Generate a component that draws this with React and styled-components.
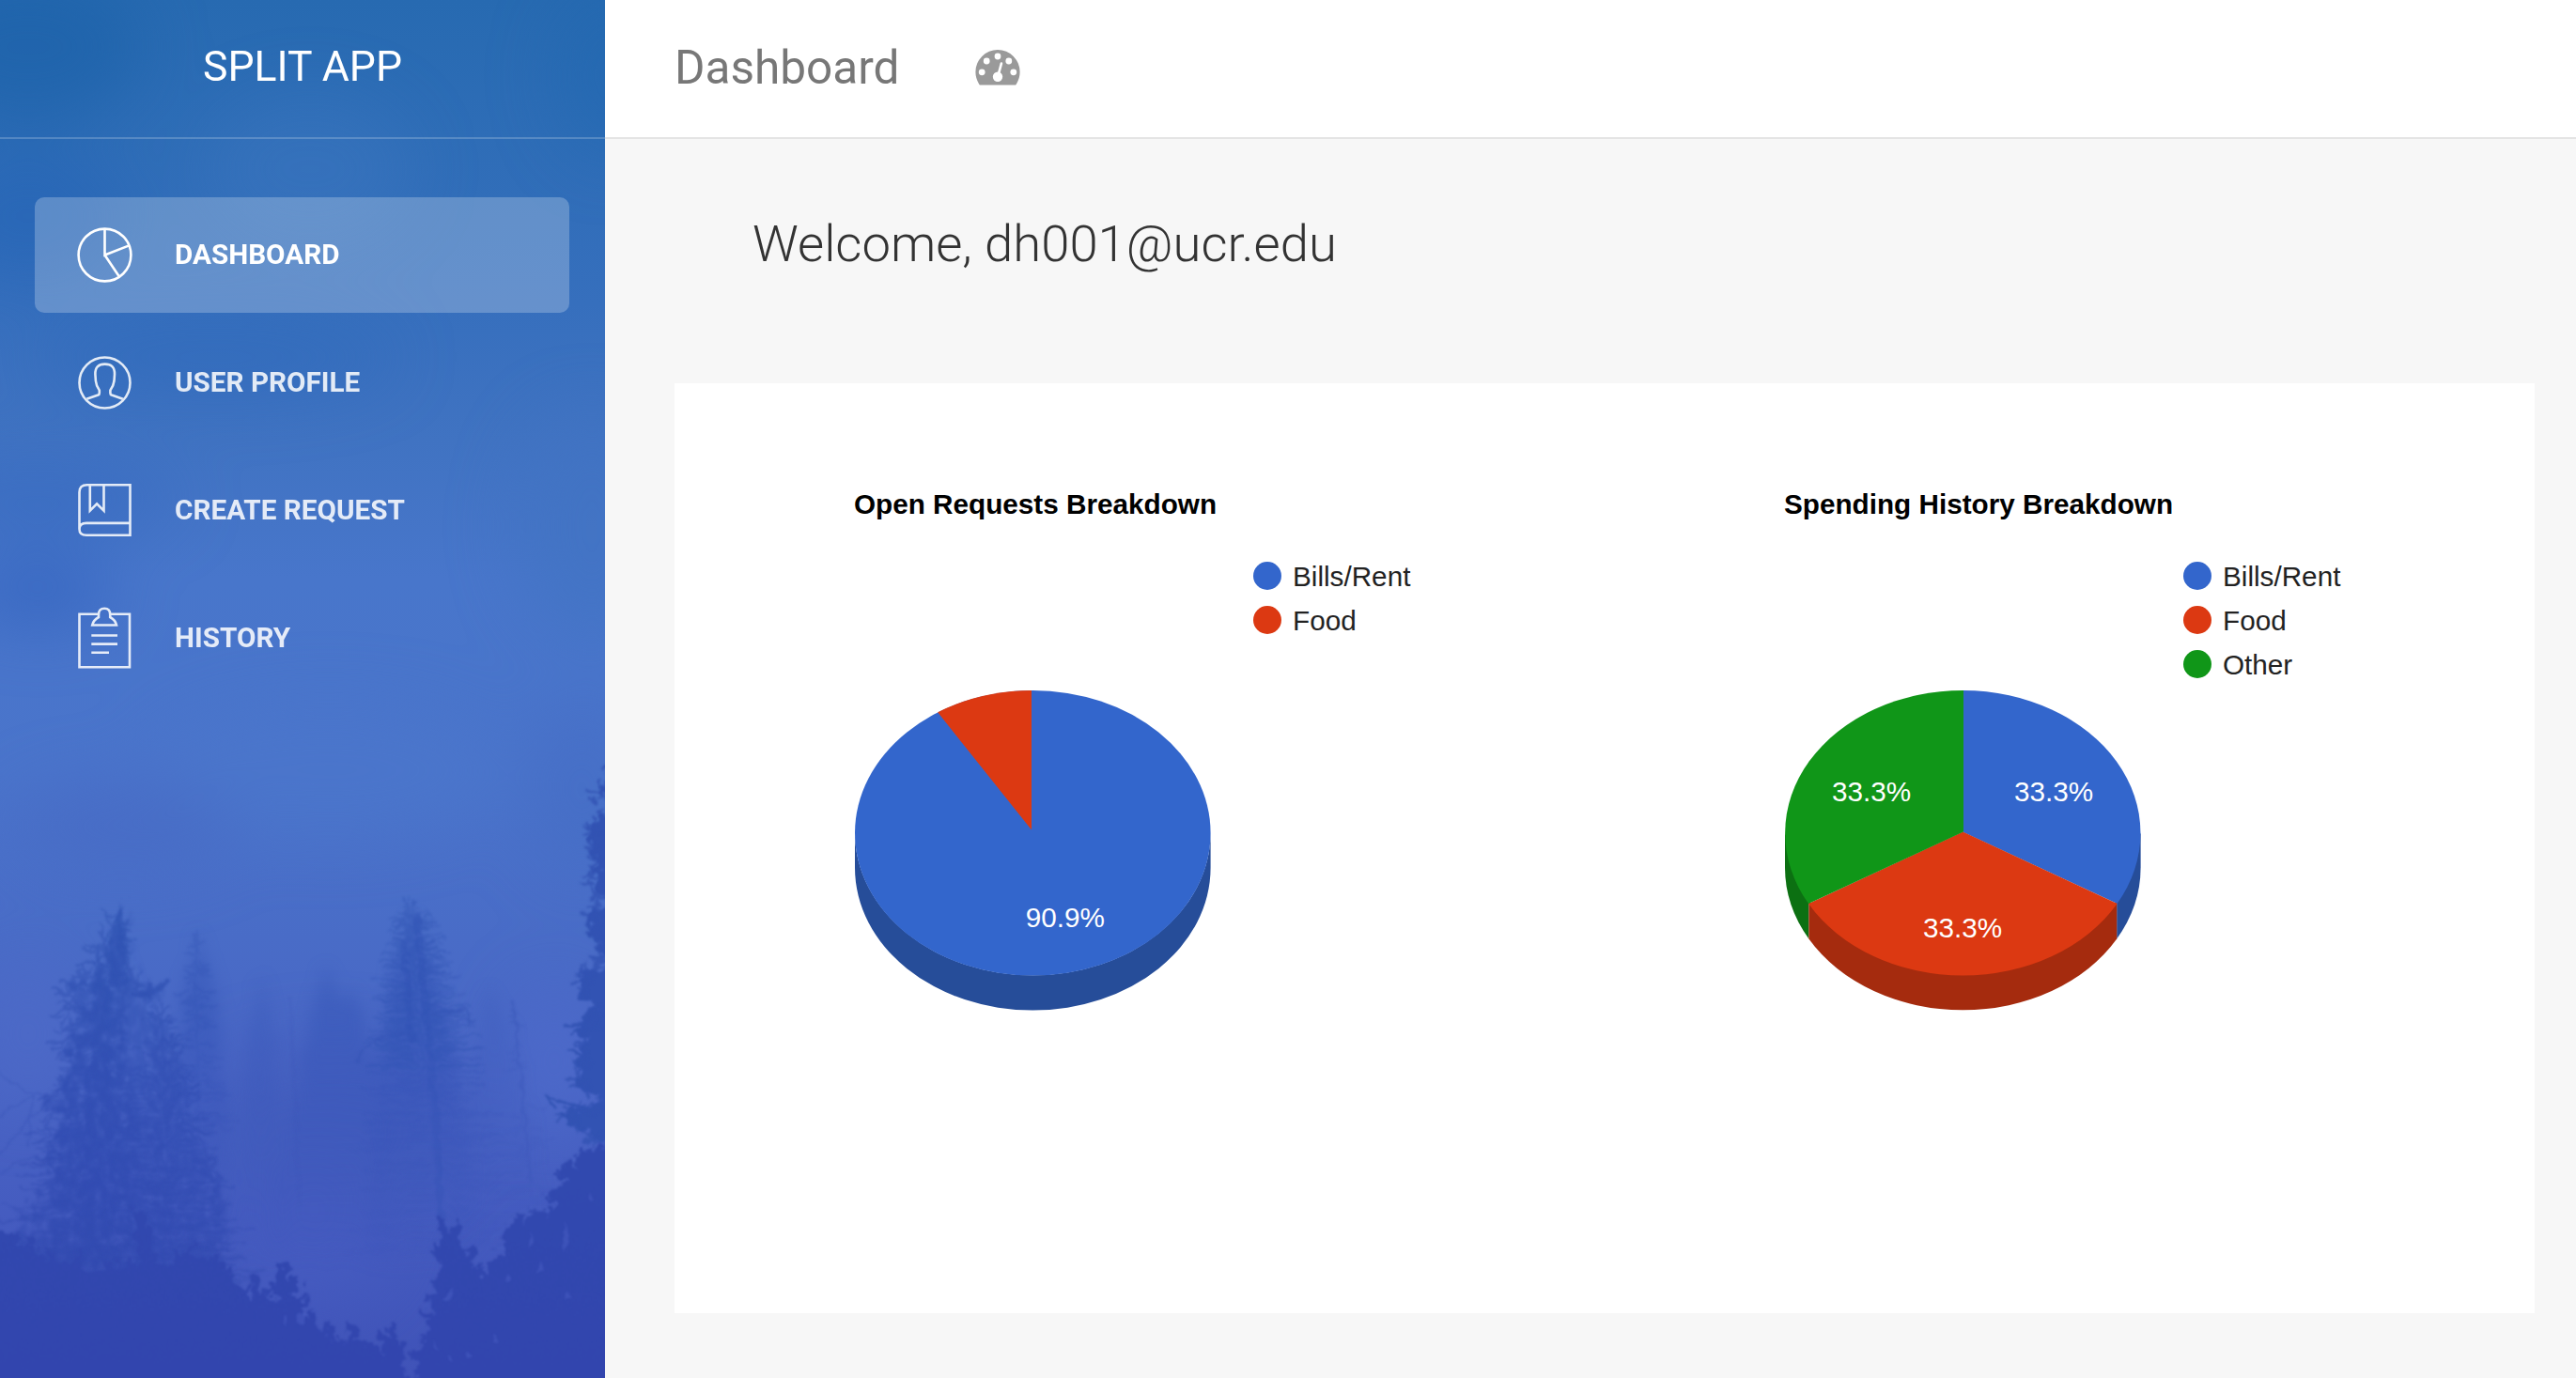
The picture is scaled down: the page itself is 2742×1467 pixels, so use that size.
import React from "react";
import styled, { createGlobalStyle } from "styled-components";

const GlobalStyle = createGlobalStyle`
  *, *::before, *::after { box-sizing: border-box; }
  body { margin: 0; background: #f7f7f7; font-family: Roboto, "Liberation Sans", sans-serif; }
`;

const Shell = styled.div`
  display: flex;
  width: 100%;
  height: 1467px;
  overflow: hidden;
`;

const Sidebar = styled.aside`
  display: grid;
  flex: 0 0 644px;
  height: 100%;
  overflow: hidden;
`;

const Backdrop = styled.svg`
  grid-area: 1 / 1;
  display: block;
  width: 644px;
  height: 1467px;

  filter {
    color-interpolation-filters: sRGB;
  }
`;

const SidebarContent = styled.div`
  grid-area: 1 / 1;
  z-index: 1;
  display: flex;
  flex-direction: column;
`;

const Brand = styled.div`
  height: 148px;
  padding-top: 45px;
  border-bottom: 2px solid rgba(255, 255, 255, 0.2);
  color: #fff;
  font-size: 44.55px;
  line-height: 53px;
  text-align: center;
`;

const Nav = styled.nav`
  display: flex;
  flex-direction: column;
  gap: 13px;
  padding: 62px 38px 0 37px;
`;

const NavItem = styled.a`
  display: flex;
  align-items: flex-start;
  gap: 39px;
  height: 123px;
  padding: 26px 0 0 40px;
  border-radius: 10px;
  background: ${(p) => (p.$active ? "rgba(255, 255, 255, 0.24)" : "transparent")};
  color: #fff;
  font-size: 29.7px;
  font-weight: 700;
  line-height: 69px;
`;

const NavIcon = styled.svg`
  width: 70px;
  height: 70px;
  margin-top: 1px;
  fill: none;
  stroke: currentColor;
  stroke-width: 2.6;
  opacity: ${(p) => (p.$active ? 1 : 0.86)};
`;

const NavLabel = styled.span`
  opacity: ${(p) => (p.$active ? 1 : 0.86)};
`;

const Main = styled.main`
  display: flex;
  flex-direction: column;
  flex: 1;
  min-width: 0;
`;

const Header = styled.header`
  display: flex;
  align-items: flex-start;
  gap: 81px;
  height: 148px;
  padding: 43px 0 0 74px;
  border-bottom: 2px solid #e4e4e4;
  background: #fff;
`;

const PageTitle = styled.h1`
  margin: 0;
  color: #777;
  font-size: 49.5px;
  font-weight: 400;
  line-height: 58px;
`;

const GaugeIcon = styled.svg`
  width: 48px;
  height: 38px;
  margin-top: 10px;
`;

const Welcome = styled.h2`
  margin: 0;
  padding: 79px 0 0 157px;
  height: 260px;
  color: #333;
  font-size: 54.45px;
  font-weight: 300;
  line-height: 64px;
`;

const Card = styled.section`
  display: grid;
  grid-template-columns: 1fr 1fr;
  height: 990px;
  margin: 0 44px 0 74px;
  background: #fff;
`;

const ChartPanel = styled.div`
  padding: 112px 0 0 191px;
  font-family: "Liberation Sans", Arial, sans-serif;
`;

const ChartTitle = styled.h3`
  margin: 0 0 44px;
  color: #000;
  font-size: 29.7px;
  font-weight: 700;
  line-height: 34px;
`;

const ChartBody = styled.div`
  display: flex;
  align-items: flex-start;
  gap: 45px;
`;

const Pie = styled.svg`
  width: 380px;
  height: 342px;
  margin-top: 137px;
  overflow: visible;
`;

const PieLabel = styled.text`
  fill: #fff;
  font-family: "Liberation Sans", Arial, sans-serif;
  font-size: 29.7px;
  text-anchor: middle;
`;

const Legend = styled.ul`
  display: flex;
  flex-direction: column;
  gap: 17px;
  margin: 0;
  padding: 0;
  list-style: none;
`;

const LegendRow = styled.li`
  display: flex;
  align-items: flex-start;
  gap: 12px;
  height: 30px;
  color: #222;
  font-size: 29.7px;
  line-height: 32px;
`;

const Dot = styled.span`
  width: 30px;
  height: 30px;
  border-radius: 50%;
  background: ${(p) => p.$color};
`;

const BLUE = "#3366cc";
const RED = "#dc3912";
const GREEN = "#109618";

const navItems = [
  {
    label: "DASHBOARD",
    active: true,
    icon: (
      <>
        <circle cx="34.5" cy="34.5" r="27.9" />
        <path d="M34.5 6.5V34.5L59.8 24.6M34.5 34.5L49.6 57" />
      </>
    ),
  },
  {
    label: "USER PROFILE",
    icon: (
      <>
        <circle cx="34.5" cy="34.5" r="27" />
        <path d="M15.3 51.7L27.4 47.5Q28.8 46.9 28.8 45.4V42.6Q25.4 38 24.9 32.5L24.4 25.5Q24 14.6 34.6 14.6Q45.4 14.6 45 25.5L44.5 32.5Q43.8 38 40.4 42.6V45.4Q40.4 46.9 41.8 47.5L53.8 51.7" />
      </>
    ),
  },
  {
    label: "CREATE REQUEST",
    icon: (
      <path d="M7.5 54V15Q7.5 7.3 15.5 7.3H61.5V60.8H15Q7.5 60.8 7.5 54.3Q7.5 47.9 15 47.9H61.5M18.8 7.3V34.6L26.1 27.4L33.5 34.6V7.3" />
    ),
  },
  {
    label: "HISTORY",
    icon: (
      <>
        <path d="M28 8.7H7.5V65.3H61V8.7H40" />
        <path d="M21.2 20.5Q22.4 15.2 28 12V9.2Q28 2.8 34.2 2.8Q40.2 2.8 40.2 9.2V12Q45.9 15.2 47 20.5Z" />
        <path d="M20.3 31.5H48M20.3 40.6H48M20.3 49.7H39" />
      </>
    ),
  },
];

const charts = [
  {
    title: "Open Requests Breakdown",
    legend: [["Bills/Rent", BLUE], ["Food", RED]],
    sides: [{ d: "M1 151.5A189.3 151.8 0 0 0 379.6 151.5V188.8A189.3 151.8 0 0 1 1 188.8Z", fill: "#264d99" }],
    slices: [
      { d: "M1 151.8A189.3 151.8 0 1 1 379.6 151.8A189.3 151.8 0 1 1 1 151.8Z", fill: BLUE },
      { d: "M189 148.5L89.2 23.3A189.3 151.8 0 0 1 189 0Z", fill: RED },
    ],
    labels: [[224.8, 252.2, "90.9%"]],
  },
  {
    title: "Spending History Breakdown",
    legend: [["Bills/Rent", BLUE], ["Food", RED], ["Other", GREEN]],
    sides: [
      { d: "M1 151.5V188.8A189.3 151.8 0 0 0 26.4 264.5V226Z", fill: "#0c7012" },
      { d: "M379.6 151.5V188.8A189.3 151.8 0 0 1 354.2 264.5V226Z", fill: "#264d99" },
      { d: "M26.4 226V264.5A189.3 151.8 0 0 0 354.2 264.5V226Z", fill: "#a52b0e" },
    ],
    slices: [
      { d: "M190.8 151V0A189.3 151.8 0 0 1 354.6 227Z", fill: BLUE },
      { d: "M190.3 150.6L354.6 227A189.3 151.8 0 0 1 26 227Z", fill: RED },
      { d: "M191 150.6L26 227A189.3 151.8 0 0 1 191 0Z", fill: GREEN },
    ],
    labels: [[287, 118.2, "33.3%"], [190, 263.3, "33.3%"], [93, 118.2, "33.3%"]],
  },
];

// Small seeded generator so the branches grow the same way on every render.
function makeRandom(seed) {
  let s = seed;
  return () => {
    s = (s * 16807) % 2147483647;
    return s / 2147483647;
  };
}

function branches({ x, lean = 0, top, bottom, spread, count, seed, power = 0.7, droop = 12 }) {
  const rnd = makeRandom(seed);
  let d = `M${x} ${top}L${x + lean} ${bottom}`;
  for (let i = 0; i < count; i++) {
    const t = rnd();
    const y = top + (bottom - top) * t;
    const cx = x + lean * t;
    const side = rnd() < 0.5 ? -1 : 1;
    const len = spread * Math.pow(t, power) * (0.25 + 0.75 * rnd());
    const dy = droop * (rnd() - 0.25);
    const start = len * 0.35 * rnd();
    d += `M${(cx + side * start).toFixed(1)} ${y.toFixed(1)}q${(side * len * 0.5).toFixed(1)} ${(dy * 1.3).toFixed(1)} ${(side * len).toFixed(1)} ${dy.toFixed(1)}`;
  }
  return d;
}

function needles({ points, seed, count, size, spray = 2.6 }) {
  const rnd = makeRandom(seed);
  let d = "";
  for (let i = 0; i < count; i++) {
    const k = Math.floor(rnd() * (points.length - 1));
    const t = rnd();
    const px = points[k][0] + (points[k + 1][0] - points[k][0]) * t;
    const py = points[k][1] + (points[k + 1][1] - points[k][1]) * t;
    const a = -Math.PI / 2 + (rnd() - 0.5) * spray;
    const l = size * (0.4 + rnd());
    d += `M${px.toFixed(1)} ${(py + 4).toFixed(1)}l${(Math.cos(a) * l).toFixed(1)} ${(Math.sin(a) * l).toFixed(1)}`;
  }
  return d;
}

const bushLeft = [
  [0, 1312], [25, 1326], [50, 1340], [100, 1352], [140, 1350], [150, 1350], [180, 1350], [200, 1337],
  [235, 1347], [250, 1372], [265, 1382], [290, 1385], [315, 1392], [335, 1410], [355, 1430],
  [380, 1438], [400, 1440], [425, 1450],
];
const bushRight = [
  [445, 1460], [455, 1410], [466, 1390], [470, 1345], [485, 1335], [500, 1345], [515, 1358], [535, 1345],
  [548, 1318], [565, 1312], [585, 1298], [595, 1272], [612, 1256], [628, 1240], [644, 1230],
];
const leftPineEdge = [
  [50, 1240], [54, 1180], [66, 1120], [68, 1060], [95, 1035], [112, 1000], [126, 970], [138, 1035],
  [160, 1070], [185, 1110], [200, 1180], [222, 1240], [234, 1300],
];
const rightPineEdge = [
  [642, 800], [636, 850], [632, 890], [634, 945], [630, 980], [640, 1015], [622, 1040], [632, 1075],
  [616, 1100], [614, 1150], [630, 1170], [600, 1182], [636, 1215],
];
const toPath = (pts) => pts.map((p, i) => `${i ? "L" : "M"}${p[0]} ${p[1]}`).join("");

function ForestBackdrop() {
  return (
    <Backdrop viewBox="0 0 644 1467" aria-hidden="true">
      <defs>
        <linearGradient id="sky" x1="0" y1="0" x2="0" y2="1">
          <stop offset="0" stopColor="#276ab1" />
          <stop offset="0.1" stopColor="#2e6db7" />
          <stop offset="0.22" stopColor="#366fbd" />
          <stop offset="0.32" stopColor="#4073c2" />
          <stop offset="0.42" stopColor="#4876cb" />
          <stop offset="0.56" stopColor="#4a74cb" />
          <stop offset="0.68" stopColor="#496cc7" />
          <stop offset="0.78" stopColor="#4965c5" />
          <stop offset="0.88" stopColor="#455cc0" />
          <stop offset="1" stopColor="#4053b8" />
        </linearGradient>
        <linearGradient id="pine" x1="0" y1="950" x2="0" y2="1400" gradientUnits="userSpaceOnUse">
          <stop offset="0" stopColor="#2f54b2" />
          <stop offset="0.5" stopColor="#314db2" />
          <stop offset="1" stopColor="#3148ae" />
        </linearGradient>
        <linearGradient id="ground" x1="0" y1="1250" x2="0" y2="1467" gradientUnits="userSpaceOnUse">
          <stop offset="0" stopColor="#3149af" />
          <stop offset="1" stopColor="#3245ae" />
        </linearGradient>
        <linearGradient id="mist" x1="0" y1="960" x2="0" y2="1360" gradientUnits="userSpaceOnUse">
          <stop offset="0" stopColor="#3254b5" stopOpacity="0.35" />
          <stop offset="0.3" stopColor="#3354b6" stopOpacity="0.55" />
          <stop offset="0.6" stopColor="#3551b8" stopOpacity="0.3" />
          <stop offset="1" stopColor="#3a52b8" stopOpacity="0" />
        </linearGradient>
        <filter id="haze" x="-60%" y="-60%" width="220%" height="220%">
          <feGaussianBlur stdDeviation="34" />
        </filter>
        <filter id="fog" x="-40%" y="-20%" width="180%" height="140%">
          <feTurbulence type="fractalNoise" baseFrequency="0.07" numOctaves="3" seed="4" />
          <feDisplacementMap in="SourceGraphic" scale="20" xChannelSelector="R" yChannelSelector="G" />
          <feGaussianBlur stdDeviation="8" />
        </filter>
        <filter id="mottled" x="-10%" y="-10%" width="120%" height="120%">
          <feTurbulence type="fractalNoise" baseFrequency="0.11 0.07" numOctaves="4" seed="23" result="noise" />
          <feDisplacementMap in="SourceGraphic" in2="noise" scale="34" xChannelSelector="R" yChannelSelector="G" result="shape" />
          <feColorMatrix in="noise" type="matrix" values="0 0 0 0 1  0 0 0 0 1  0 0 0 0 1  2.6 0 0 0 -0.42" result="holes" />
          <feComposite in="shape" in2="holes" operator="in" />
          <feGaussianBlur stdDeviation="1.5" />
        </filter>
        <filter id="ragged" x="-10%" y="-10%" width="120%" height="120%">
          <feTurbulence type="fractalNoise" baseFrequency="0.09" numOctaves="4" seed="11" />
          <feDisplacementMap in="SourceGraphic" scale="20" xChannelSelector="R" yChannelSelector="G" />
          <feGaussianBlur stdDeviation="0.9" />
        </filter>
        <filter id="soft" x="-10%" y="-10%" width="120%" height="120%">
          <feTurbulence type="fractalNoise" baseFrequency="0.08" numOctaves="2" seed="7" />
          <feDisplacementMap in="SourceGraphic" scale="9" xChannelSelector="R" yChannelSelector="G" />
          <feGaussianBlur stdDeviation="1.1" />
        </filter>
      </defs>

      <rect width="644" height="1467" fill="url(#sky)" />

      <g filter="url(#haze)">
        <ellipse cx="30" cy="50" rx="120" ry="80" fill="#1b61a8" opacity="0.6" />
        <ellipse cx="30" cy="230" rx="100" ry="70" fill="#1f60b4" opacity="0.4" />
        <ellipse cx="650" cy="80" rx="60" ry="90" fill="#1f66ae" opacity="0.4" />
        <ellipse cx="330" cy="180" rx="110" ry="80" fill="#4179c2" opacity="0.3" />
        <ellipse cx="230" cy="380" rx="190" ry="40" fill="#2c69bb" opacity="0.45" />
        <ellipse cx="40" cy="530" rx="150" ry="40" fill="#3368bf" opacity="0.5" />
        <ellipse cx="40" cy="630" rx="80" ry="35" fill="#3263bd" opacity="0.7" />
        <ellipse cx="630" cy="560" rx="80" ry="120" fill="#4273c3" opacity="0.7" />
        <ellipse cx="350" cy="820" rx="190" ry="70" fill="#4b76cc" opacity="0.6" />
        <ellipse cx="130" cy="880" rx="120" ry="45" fill="#476bc5" opacity="0.7" />
        <ellipse cx="620" cy="840" rx="60" ry="90" fill="#456dc4" opacity="0.6" />
        <ellipse cx="30" cy="1100" rx="60" ry="80" fill="#4e6ac8" opacity="0.6" />
        <ellipse cx="590" cy="1130" rx="45" ry="80" fill="#4e6aca" opacity="0.8" />
        <ellipse cx="350" cy="1200" rx="150" ry="90" fill="#415bbb" opacity="0.6" />
        <ellipse cx="330" cy="1320" rx="90" ry="70" fill="#465bc0" opacity="0.7" />
      </g>

      <g filter="url(#fog)" fill="url(#mist)">
        <path d="M211 990L226 1040L238 1120L252 1350H180L188 1120L198 1040Z" opacity="0.9" />
        <path d="M278 1035L290 1080L306 1350H245L266 1090Z" opacity="0.5" />
        <path d="M346 1030L366 1070L374 1052L400 1120L420 1340H280L325 1110Z" opacity="0.8" />
        <path d="M520 1050L545 1100L590 1340H480L505 1110Z" opacity="0.35" />
        <path d="M440 970L462 1040L482 1110L515 1350H390L408 1100L422 1030Z" opacity="1" />
      </g>

      <g fill="none" filter="url(#soft)">
        <path
          d={branches({ x: 441, lean: 28, top: 960, bottom: 1330, spread: 84, count: 300, seed: 42, power: 0.5, droop: 18 })}
          stroke="url(#mist)" strokeWidth="1.9" opacity="0.75"
        />
        <path
          d={branches({ x: 434, lean: 18, top: 968, bottom: 1140, spread: 56, count: 220, seed: 91, power: 0.5, droop: -26 })}
          stroke="#2f54b3" strokeWidth="1.8" opacity="0.38"
        />
        <path d="M443 970L455 1090L464 1190L470 1300" stroke="#3050b2" strokeWidth="7" opacity="0.3" />
        <path d="M430 1000L438 1110" stroke="#3050b2" strokeWidth="7" opacity="0.3" />
        <path d="M380 1130Q400 1095 440 1102M470 1078L496 1074L500 1090" stroke="#3453b5" strokeWidth="2.5" opacity="0.5" />
        <path d="M546 1065L556 1160L565 1260" stroke="#3b57b8" strokeWidth="3" opacity="0.3" />
        <path
          d={branches({ x: 546, lean: 20, top: 1065, bottom: 1280, spread: 34, count: 50, seed: 8 })}
          stroke="url(#mist)" strokeWidth="1.6" opacity="0.5"
        />
        <path d="M308 1060L314 1160L318 1280" stroke="#3b57b8" strokeWidth="3" opacity="0.2" />
        <path
          d={branches({ x: 208, lean: 4, top: 990, bottom: 1200, spread: 34, count: 110, seed: 19, power: 0.5 })}
          stroke="url(#mist)" strokeWidth="2.2" opacity="0.75"
        />
      </g>

      <g filter="url(#soft)" fill="none" stroke="url(#pine)">
        <path
          d={branches({ x: 105, lean: 10, top: 1010, bottom: 1370, spread: 130, count: 460, seed: 5, power: 1, droop: 34 })}
          strokeWidth="1.9" opacity="0.45"
        />
        <path
          d={branches({ x: 172, lean: 12, top: 1080, bottom: 1370, spread: 78, count: 280, seed: 77, power: 0.6, droop: -26 })}
          strokeWidth="1.9" opacity="0.42"
        />
        <path d={needles({ points: leftPineEdge, seed: 12, count: 190, size: 15, spray: 5 })} strokeWidth="2.2" opacity="0.5" />
        <path d="M0 1140Q20 1165 50 1166L90 1150M0 1190Q20 1175 34 1166L30 1220M0 1230Q22 1200 45 1178M0 1280L40 1296M0 1250Q30 1225 60 1235" strokeWidth="2" opacity="0.3" />
        <path d="M140 1058Q160 1064 179 1044M158 1062L160 1046" strokeWidth="5" opacity="0.7" />
      </g>

      <g filter="url(#mottled)" fill="url(#pine)">
        <path
          d="M131 960L136 990L140 1015L144 1040L160 1050L180 1046L168 1062L152 1070L164 1084L182 1098L190 1130L198 1165L196 1200L216 1225L236 1255L240 1300L245 1380H0L5 1330L36 1285L54 1240L60 1180L46 1168L64 1158L76 1125L66 1112L76 1095L73 1066L82 1050L100 1044L105 1020L117 1002L123 975Z"
          opacity="0.55"
        />
        <path d="M131 965L141 1040L136 1110L150 1200L150 1360H50L66 1200L74 1130L98 1060L118 1010Z" opacity="0.6" />
        <path d="M168 1100L184 1110L192 1340H164Z" opacity="0.4" />
      </g>
      <g filter="url(#soft)" fill="url(#pine)">
        <path d="M129 962L134 1010L135 1048L116 1052L115 1005Z" opacity="0.6" />
        <path d="M103 1050L114 1050L124 1350H80Z" opacity="0.35" />
      </g>

      <g filter="url(#ragged)">
        <path
          d="M654 780L642 840L650 862L628 878L628 898L636 922L634 950L654 952ZM654 966L629 967L626 988L637 1012L654 1024ZM654 1030L615 1035L620 1062L634 1070L622 1085L606 1100L626 1102L612 1128L617 1155L640 1168L622 1178L590 1182L612 1200L631 1212L654 1225Z"
          fill="#3253b3"
        />
      </g>
      <g filter="url(#soft)" fill="none" stroke="#3253b3">
        <path d={needles({ points: rightPineEdge, seed: 51, count: 160, size: 12, spray: 6 })} strokeWidth="2.6" opacity="0.8" />
        <path d="M640 1094L600 1092M630 1130L604 1116M640 1185L582 1168L590 1180" strokeWidth="3" />
      </g>

      <g filter="url(#ragged)" fill="url(#ground)" stroke="url(#ground)" strokeLinecap="round">
        <path d={`${toPath(bushLeft)}L445 1490H-20V1312Z`} stroke="none" />
        <path d={`${toPath(bushRight)}L665 1225V1490H440Z`} stroke="none" />
        <path d="M142 1290L156 1290L168 1360H150Z" stroke="none" />
        <path d={needles({ points: bushLeft, seed: 31, count: 90, size: 13 })} strokeWidth="6" />
        <path d={needles({ points: bushRight, seed: 63, count: 90, size: 16 })} strokeWidth="7" />
        <path
          d="M301 1394V1349M301 1379L317 1362M301 1384L288 1366M272 1389V1362M376 1444V1414M376 1439L387 1429M418 1454V1412M418 1444L406 1422M418 1444L428 1429M472 1404V1302M474 1334L486 1304M486 1354V1304M486 1354L504 1334M524 1374L528 1346M554 1334V1296M566 1334V1296M554 1329L541 1316M594 1304V1279M622 1264V1230"
          strokeWidth="9" fill="none"
        />
      </g>

      <g filter="url(#soft)" fill="#4a5fc4" opacity="0.5">
        <path d="M318 1395l8 4l-4 12l-8 -4zM303 1400l4 12l-5 -4zM564 1310l5 12l-6 6zM600 1300l6 24l-7 8zM574 1342l6 10l-8 4zM604 1375l5 6l-6 4zM470 1385l12 -14l-2 14zM540 1355l4 8l-6 2zM628 1268l5 8l-6 2zM527 1420l4 8l-5 0zM498 1438l5 6l-6 2zM460 1425l8 12l-5 -2zM476 1440l6 10l-5 -2z" />
      </g>
    </Backdrop>
  );
}

function Gauge() {
  return (
    <GaugeIcon viewBox="0 0 48 38" aria-hidden="true">
      <path d="M24 0A23.6 23.6 0 0 1 47.6 23.6Q47.6 30.5 43.9 36.4Q43.2 37.6 42 37.6H6Q4.8 37.6 4.1 36.4Q.4 30.5 .4 23.6A23.6 23.6 0 0 1 24 0Z" fill="#9a9a9a" />
      <g fill="#fff">
        <circle cx="7.2" cy="23.8" r="3.4" />
        <circle cx="12.2" cy="12" r="3.4" />
        <circle cx="24" cy="7" r="3.4" />
        <circle cx="35.8" cy="12" r="3.4" />
        <circle cx="40.8" cy="23.8" r="3.4" />
        <circle cx="24" cy="28.8" r="5.2" />
      </g>
      <path d="M24.3 28L27.9 14.6" stroke="#fff" strokeWidth="2.7" strokeLinecap="round" />
    </GaugeIcon>
  );
}

function Chart({ title, legend, sides, slices, labels }) {
  return (
    <ChartPanel>
      <ChartTitle>{title}</ChartTitle>
      <ChartBody>
        <Pie viewBox="0 0 380 342">
          {[...sides, ...slices].map((s) => (
            <path key={s.d} d={s.d} fill={s.fill} />
          ))}
          {labels.map(([x, y, value]) => (
            <PieLabel key={x} x={x} y={y}>{value}</PieLabel>
          ))}
        </Pie>
        <Legend>
          {legend.map(([name, color]) => (
            <LegendRow key={name}>
              <Dot $color={color} />
              {name}
            </LegendRow>
          ))}
        </Legend>
      </ChartBody>
    </ChartPanel>
  );
}

export default function App() {
  return (
    <>
      <GlobalStyle />
      <Shell>
        <Sidebar>
          <ForestBackdrop />
          <SidebarContent>
            <Brand>SPLIT APP</Brand>
            <Nav>
              {navItems.map((item) => (
                <NavItem key={item.label} $active={item.active}>
                  <NavIcon $active={item.active} viewBox="0 0 70 70">{item.icon}</NavIcon>
                  <NavLabel $active={item.active}>{item.label}</NavLabel>
                </NavItem>
              ))}
            </Nav>
          </SidebarContent>
        </Sidebar>
        <Main>
          <Header>
            <PageTitle>Dashboard</PageTitle>
            <Gauge />
          </Header>
          <Welcome>Welcome, dh001@ucr.edu</Welcome>
          <Card>
            {charts.map((chart) => (
              <Chart key={chart.title} {...chart} />
            ))}
          </Card>
        </Main>
      </Shell>
    </>
  );
}
